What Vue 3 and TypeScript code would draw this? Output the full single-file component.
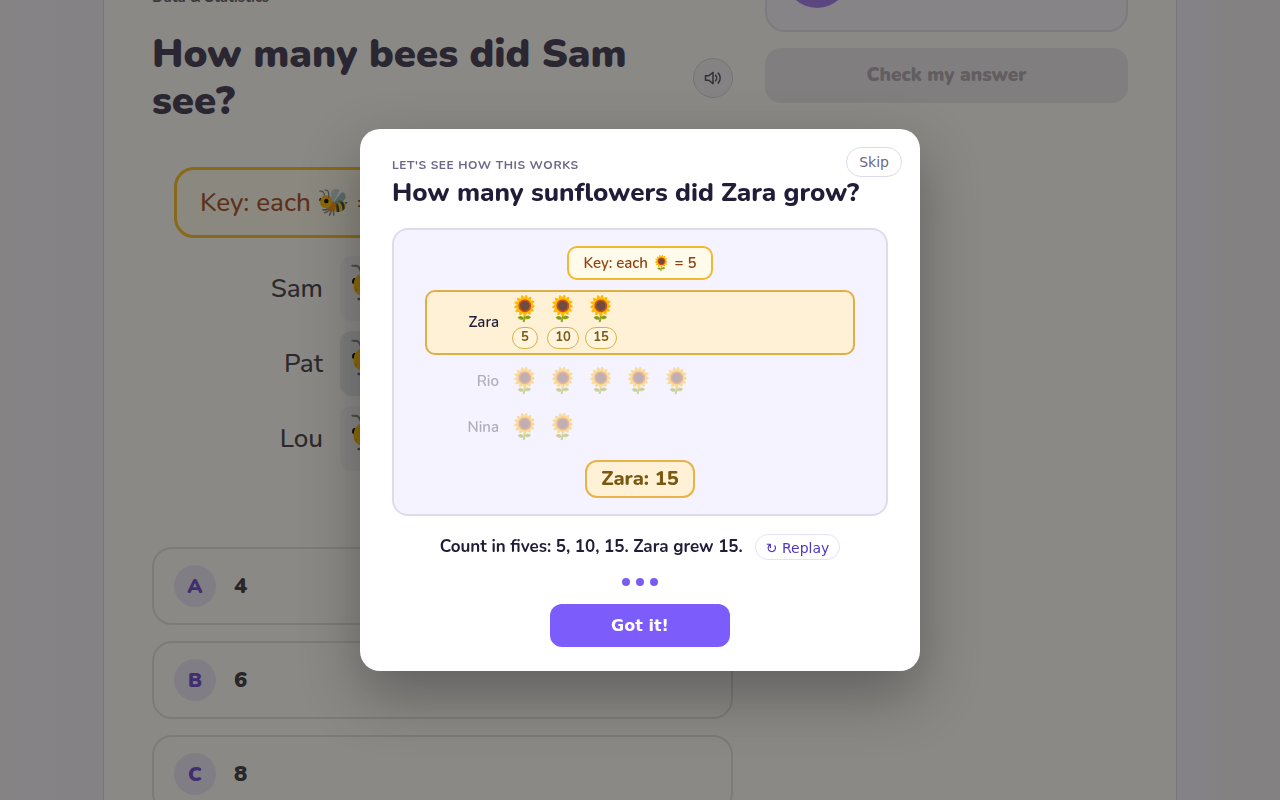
<script setup lang="ts">
import { ref } from 'vue'

interface GraphRow {
  name: string
  count: number
  active: boolean
}

const rows: GraphRow[] = [
  { name: 'Zara', count: 3, active: true },
  { name: 'Rio', count: 5, active: false },
  { name: 'Nina', count: 2, active: false },
]

const beeRows = [
  { name: 'Sam', count: 3, alt: false },
  { name: 'Pat', count: 4, alt: true },
  { name: 'Lou', count: 2, alt: false },
]

const answers = [
  { letter: 'A', value: 4 },
  { letter: 'B', value: 6 },
  { letter: 'C', value: 8 },
]

const step = 5
const open = ref(true)
</script>

<template>
  <div class="stage">
    <main class="sheet">
      <section class="question">
        <p class="topic">Data &amp; Statistics</p>
        <header class="heading">
          <h1>How many bees did Sam see?</h1>
          <button class="speak" type="button" aria-label="Read aloud">
            <svg viewBox="0 0 24 24" width="18" height="18" fill="none" stroke="currentColor" stroke-width="2" stroke-linejoin="round" stroke-linecap="round">
              <path d="M2 9v6h4.500l5.500 4.500v-15l-5.500 4.500z" />
              <path d="M15.500 8.500a5 5 0 0 1 0 7" />
              <path d="M19 5.500a9.500 9.500 0 0 1 0 13" />
            </svg>
          </button>
        </header>
        <div class="bee-graph">
          <div class="bee-key">Key: each <span class="emoji">🐝</span> = 2</div>
          <div v-for="row in beeRows" :key="row.name" class="bee-row">
            <span class="bee-name">{{ row.name }}</span>
            <span class="bee-cell" :class="{ alt: row.alt }">
              <span v-for="n in row.count" :key="n" class="emoji">🐝</span>
            </span>
          </div>
        </div>
        <div class="answers">
          <button v-for="a in answers" :key="a.letter" class="answer" type="button">
            <span class="letter">{{ a.letter }}</span>
            <span>{{ a.value }}</span>
          </button>
        </div>
      </section>
      <aside class="side">
        <div class="helper"><span class="avatar"></span></div>
        <button class="check" type="button" disabled>Check my answer</button>
      </aside>
    </main>

    <div v-if="open" class="overlay">
      <div class="dialog" role="dialog" aria-modal="true" aria-labelledby="dialog-title">
        <button class="skip" type="button" @click="open = false">Skip</button>
        <p class="kicker">LET'S SEE HOW THIS WORKS</p>
        <h2 id="dialog-title">How many sunflowers did Zara grow?</h2>
        <div class="panel">
          <div class="key">Key: each <span class="emoji">🌻</span> = {{ step }}</div>
          <div class="rows">
            <div v-for="row in rows" :key="row.name" class="row" :class="{ active: row.active }">
              <span class="name">{{ row.name }}</span>
              <span v-for="n in row.count" :key="n" class="item">
                <span class="emoji flower">🌻</span>
                <span v-if="row.active" class="badge">{{ n * step }}</span>
              </span>
            </div>
          </div>
          <div class="result">Zara: 15</div>
        </div>
        <div class="caption">
          <span>Count in fives: 5, 10, 15. Zara grew 15.</span>
          <button class="replay" type="button">↻ Replay</button>
        </div>
        <div class="dots"><i></i><i></i><i></i></div>
        <button class="done" type="button" @click="open = false">Got it!</button>
      </div>
    </div>
  </div>
</template>

<style>
body {
  margin: 0;
  overflow: hidden;
}
</style>

<style scoped>
.stage {
  box-sizing: border-box;
  height: 100vh;
  overflow: hidden;
  padding: 0 103px;
  background: linear-gradient(90deg, #f3f0f5 0, #f3effa 8%, #f3effa 94%, #f0ecf0 96%);
  font-family: Nunito, "Open Sans", "Noto Sans", sans-serif;
  font-weight: 500;
  color: #3e3d44;
}
.stage * {
  box-sizing: border-box;
}
p, h1, h2 {
  margin: 0;
}
button {
  font: inherit;
  cursor: pointer;
}
.emoji {
  font-family: "Noto Color Emoji", sans-serif;
}
.sheet {
  display: grid;
  grid-template-columns: 1.6fr 1fr;
  gap: 32px;
  min-height: 100vh;
  padding: 0 48px;
  border: 1px solid #dcd6e8;
  border-width: 0 1px;
  background: #fefcf9;
}
.topic {
  margin-top: -13px;
  color: #5c5a66;
  font-size: 15px;
  line-height: 20px;
  font-weight: 700;
}
.heading {
  display: flex;
  align-items: center;
  justify-content: space-between;
  gap: 32px;
  margin-top: 24px;
}
h1 {
  color: #3e3850;
  font-size: 40px;
  line-height: 47px;
  font-weight: 900;
}
.speak {
  display: grid;
  flex: none;
  place-items: center;
  width: 40px;
  height: 40px;
  padding: 0;
  border: 1px solid #d5d0dc;
  border-radius: 50%;
  background: #f3eff5;
  color: #4e4a56;
}
.bee-graph {
  display: flex;
  flex-direction: column;
  margin-top: 42px;
  padding: 0 22px;
  font-size: 26px;
  line-height: 36px;
}
.bee-key {
  align-self: flex-start;
  width: 100%;
  margin-bottom: 18px;
  padding: 14px 23px;
  border: 3px solid #f8bc20;
  border-radius: 20px;
  background: #fffaeb;
  color: #a34c22;
}
.bee-row {
  display: flex;
  align-items: center;
  gap: 17px;
  height: 65px;
  margin-bottom: 10px;
}
.bee-name {
  width: 149px;
  text-align: right;
}
.bee-cell {
  display: flex;
  align-items: center;
  gap: 8px;
  height: 65px;
  padding: 0 8px 8px;
  border-radius: 12px;
  background: #f4f4f3;
  font-size: 46px;
}
.bee-cell.alt {
  background: #e4e7e8;
}
.answers {
  display: grid;
  gap: 16px;
  margin-top: 66px;
}
.answer {
  display: flex;
  align-items: center;
  gap: 18px;
  height: 78px;
  padding: 0 20px;
  border: 2px solid #e3dfdf;
  border-radius: 20px;
  background: transparent;
  color: #38363c;
  font-size: 22px;
  font-weight: 900;
}
.letter {
  display: grid;
  place-items: center;
  width: 42px;
  height: 42px;
  border-radius: 50%;
  background: #ebe4f4;
  color: #6848c8;
  font-size: 20px;
}
.helper {
  display: flex;
  align-items: flex-start;
  height: 108px;
  margin-top: -76px;
  padding: 18px;
  border: 2px solid #e3dfec;
  border-radius: 20px;
  background: #f6f2fa;
}
.avatar {
  width: 64px;
  height: 64px;
  border-radius: 50%;
  background: #a176ed;
}
.check {
  width: 100%;
  height: 55px;
  margin-top: 16px;
  padding: 0 0 2px;
  border: 0;
  border-radius: 16px;
  background: #ebe7ea;
  color: #aaa5ad;
  font-size: 19px;
  font-weight: 900;
}
.overlay {
  position: fixed;
  inset: 0;
  display: grid;
  place-items: center;
  background: rgba(24, 22, 20, 0.5);
}
.dialog {
  position: relative;
  display: flex;
  flex-direction: column;
  width: 560px;
  max-width: 100%;
  padding: 26px 32px 24px;
  border-radius: 20px;
  background: #fff;
  box-shadow: 0 24px 60px rgba(0, 0, 0, 0.3);
  color: #211c38;
}
.skip {
  position: absolute;
  top: 18px;
  right: 18px;
  height: 30px;
  padding: 0 12px;
  border: 1px solid #dcdaea;
  border-radius: 15px;
  background: #fff;
  color: #6c6888;
  font-family: "DejaVu Sans", sans-serif;
  font-size: 14px;
}
.kicker {
  color: #6c6888;
  font-size: 12px;
  line-height: 20px;
  font-weight: 700;
  letter-spacing: 0.05em;
}
h2 {
  font-size: 26px;
  line-height: 36px;
  font-weight: 800;
}
.panel {
  display: flex;
  flex-direction: column;
  align-items: center;
  margin-top: 17px;
  padding: 16px 31px;
  border: 2px solid #dedbed;
  border-radius: 16px;
  background: #f5f3ff;
}
.key {
  padding: 4px 14px;
  border: 2px solid #f2b930;
  border-radius: 10px;
  background: #fffbeb;
  color: #92400e;
  font-size: 15px;
  line-height: 22px;
  font-weight: 600;
}
.rows {
  display: grid;
  width: 100%;
  margin-top: 10px;
}
.row {
  display: flex;
  align-items: center;
  gap: 6px;
  height: 46px;
  padding: 0 2px 2px;
  color: #b0adbe;
  font-size: 15px;
  font-weight: 600;
}
.row.active {
  height: 65px;
  margin-bottom: 4px;
  padding: 0 0 2px;
  border: 2px solid #dfae45;
  border-radius: 10px;
  background: #fff1d6;
  color: #211c38;
}
.name {
  width: 72px;
  margin-right: 4px;
  text-align: right;
}
.item {
  display: flex;
  flex-direction: column;
  align-items: center;
  gap: 4px;
  width: 32px;
}
.flower {
  font-size: 25px;
  line-height: 28px;
  opacity: 0.4;
}
.active .flower {
  opacity: 1;
}
.badge {
  min-width: 26px;
  height: 22px;
  padding: 0 7px;
  border: 1px solid #dfae45;
  border-radius: 11px;
  background: #fff5df;
  color: #7a5a14;
  font-size: 13px;
  line-height: 19px;
  font-weight: 700;
  text-align: center;
}
.result {
  margin-top: 9px;
  padding: 0 14px;
  border: 2px solid #e8b44a;
  border-radius: 12px;
  background: #fff1d6;
  color: #7a5812;
  font-size: 20px;
  line-height: 34px;
  font-weight: 800;
}
.caption {
  display: flex;
  align-items: center;
  justify-content: center;
  gap: 12px;
  margin-top: 18px;
  font-size: 17px;
  line-height: 26px;
  font-weight: 700;
}
.replay {
  height: 26px;
  padding: 0 10px;
  border: 1px solid #e6e1fb;
  border-radius: 13px;
  background: #fff;
  color: #4f37c4;
  font-family: "DejaVu Sans", sans-serif;
  font-size: 14px;
  font-weight: 400;
}
.dots {
  display: flex;
  justify-content: center;
  gap: 6px;
  margin: 18px 0;
}
.dots i {
  width: 8px;
  height: 8px;
  border-radius: 50%;
  background: #7b5cf0;
}
.done {
  align-self: center;
  width: 180px;
  height: 43px;
  border: 0;
  border-radius: 12px;
  background: #7c5cfa;
  color: #fff;
  font-family: "DejaVu Sans", sans-serif;
  font-size: 16px;
  font-weight: 700;
}
</style>
